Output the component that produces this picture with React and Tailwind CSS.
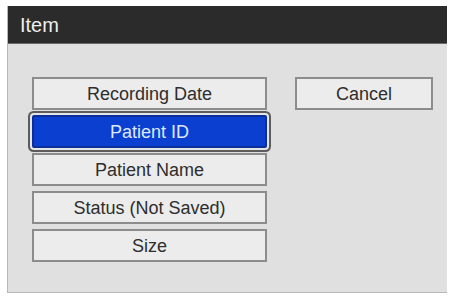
import { useState } from "react";

const items = ["Recording Date", "Patient ID", "Patient Name", "Status (Not Saved)", "Size"];

export default function App() {
  const [selected, setSelected] = useState("Patient ID");

  return (
    <div className="w-[451px] h-[296px] bg-white pt-[6px] pl-[7px] font-['Liberation_Sans',Arial,sans-serif]">
      <div className="w-[440px] h-[287px] bg-[#e0e0e0] border-l border-b border-[#b8b8b8] flex flex-col">
        {/* Title bar */}
        <div className="h-[38px] bg-[#2b2b2b] border-b border-[#6a6a6a] flex items-center pl-[12px]">
          <span className="text-[20px] text-[#eeeeee] leading-none">Item</span>
        </div>

        {/* Body */}
        <div className="flex pt-[33px] pl-[24px] gap-[28px]">
          <div className="flex flex-col gap-[5px] w-[235px]">
            {items.map((label) => {
              const active = label === selected;
              return (
                <button
                  key={label}
                  onClick={() => setSelected(label)}
                  className={
                    active
                      ? "h-[33px] bg-[#0b3fd0] border-2 border-[#0a2f9a] text-[#dce9ff] text-[18px] leading-none rounded-[2px] ring-2 ring-[#5c5c5c] ring-offset-2 ring-offset-[#e6e6e6]"
                      : "h-[33px] bg-[#ececec] border-2 border-[#8c8c8c] text-[#2e2e2e] text-[18px] leading-none"
                  }
                >
                  {label}
                </button>
              );
            })}
          </div>
          <div>
            <button className="h-[33px] w-[138px] bg-[#ececec] border-2 border-[#8c8c8c] text-[#2e2e2e] text-[18px] leading-none">
              Cancel
            </button>
          </div>
        </div>
      </div>
    </div>
  );
}
